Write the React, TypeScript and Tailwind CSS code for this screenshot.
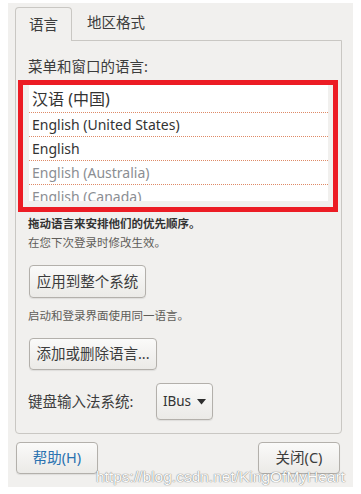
import React from 'react';

const FONT = "font-['Noto_Sans','Noto_Sans_CJK_SC',sans-serif]";

const btn =
  'rounded-[4px] border border-[#b3b0ab] bg-gradient-to-b from-[#fafaf9] to-[#ebeae7] shadow-[0_1px_1px_rgba(0,0,0,0.08)] flex items-center justify-center';

const LANGS = [
  { name: '汉语 (中国)', main: true, muted: false },
  { name: 'English (United States)', main: false, muted: false },
  { name: 'English', main: false, muted: false },
  { name: 'English (Australia)', main: false, muted: true },
  { name: 'English (Canada)', main: false, muted: true },
];

export default function App() {
  return (
    <div className={`${FONT} relative w-[361px] h-[494px] bg-white pl-[8px] pt-[3px] text-[#3c3c3c]`}>
      <div className="w-[345px] h-[484px] bg-[#f1f0ee] flex flex-col">
        {/* tabs */}
        <div className="flex items-end pl-[7px] pt-[4px] h-[37px]">
          <div className="relative z-10 -mb-px w-[57px] h-[34px] rounded-t-[4px] border border-b-0 border-[#c9c7c3] bg-[#f1f0ee] flex items-center justify-center text-[14.5px]">
            语言
          </div>
          <div className="w-[88px] h-[34px] flex items-center justify-center text-[14.5px]">地区格式</div>
        </div>

        {/* panel */}
        <div className="ml-[7px] w-[327px] h-[394px] rounded-b-[4px] border border-[#c9c7c3] flex flex-col">
          <div className="pl-[12px] pt-[15px] text-[14.5px] leading-[20px]">菜单和窗口的语言:</div>

          <div className="mt-[4px] ml-[2px] w-[320px] h-[132px] border-[5px] border-[#ec1c24] pl-[6px] pr-[4px] pb-[4px]">
            <div className="w-[299px] h-[116px] bg-white overflow-hidden">
              {LANGS.map((l) => (
                <div
                  key={l.name}
                  className={`${l.main ? 'h-[28px] text-[16px]' : 'h-[24px] text-[14px]'} ${
                    l.muted ? 'text-[#8b8e93]' : 'text-[#333]'
                  } flex items-center pl-[3px] border-b border-dotted border-[#de8a66] shrink-0 whitespace-nowrap`}
                >
                  {l.name}
                </div>
              ))}
            </div>
          </div>

          <div className="pl-[12px] pt-[4px] text-[11.5px] leading-[16px] font-bold text-[#333]">
            拖动语言来安排他们的优先顺序。
          </div>
          <div className="pl-[12px] pt-[3px] text-[11.5px] leading-[16px] text-[#5f5d59]">在您下次登录时修改生效。</div>

          <div className="pl-[13px] pt-[14px]">
            <div className={`${btn} w-[117px] h-[33px] text-[14.5px]`}>应用到整个系统</div>
          </div>

          <div className="pl-[12px] pt-[10px] text-[11.5px] leading-[16px] text-[#5f5d59]">启动和登录界面使用同一语言。</div>

          <div className="pl-[13px] pt-[14px]">
            <div className={`${btn} w-[128px] h-[32px] text-[14.5px]`}>添加或删除语言...</div>
          </div>

          <div className="flex items-center pl-[12px] pt-[13px]">
            <span className="text-[14.5px] w-[128px]">键盘输入法系统:</span>
            <div className={`${btn} w-[57px] h-[37px] gap-[6px] text-[13.5px] text-[#333]`}>
              IBus
              <svg width="9" height="6" viewBox="0 0 9 6">
                <path d="M0 0 H9 L4.5 5.5 Z" fill="#2e2e2e" />
              </svg>
            </div>
          </div>
        </div>

        {/* footer buttons */}
        <div className="flex justify-between pl-[8px] pr-[13px] pt-[8px]">
          <div className={`${btn} w-[82px] h-[32px] text-[14.5px] text-[#2a72b0]`}>帮助(H)</div>
          <div className={`${btn} w-[82px] h-[32px] text-[14.5px]`}>关闭(C)</div>
        </div>
      </div>

      <div className="absolute left-[96px] top-[465px] font-['Liberation_Sans',sans-serif] text-[15.5px] text-[#fbfbfb] whitespace-nowrap [text-shadow:0_0_1px_rgba(100,100,100,0.9),0_0_1px_rgba(100,100,100,0.6)]">
        https://blog.csdn.net/KingOfMyHeart
      </div>
    </div>
  );
}
